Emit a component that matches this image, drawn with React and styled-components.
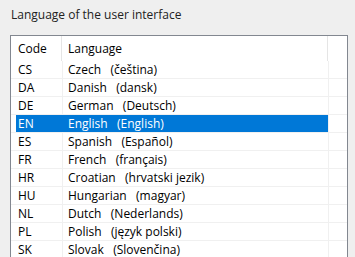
import React from 'react';
import styled, { createGlobalStyle } from 'styled-components';

const GlobalStyle = createGlobalStyle`
  html, body {
    margin: 0;
    padding: 0;
    background: #efefef;
    overflow: hidden;
  }
  body {
    font-family: "Open Sans", "Noto Sans", sans-serif;
    font-size: 12px;
    color: #1a1a1a;
  }
`;

const Page = styled.div`
  width: 355px;
  height: 257px;
  padding: 7px 0 0 10px;
  box-sizing: border-box;
  overflow: hidden;
`;

const Title = styled.div`
  height: 28px;
  line-height: 16px;
  padding-left: 1px;
  color: #222;
`;

const ListBox = styled.div`
  width: 338px;
  height: 223px;
  box-sizing: border-box;
  border: 1px solid #828790;
  background: #fff;
  overflow: hidden;
`;

const HeaderRow = styled.div`
  display: flex;
  height: 25px;
  line-height: 25px;
  color: #000;
`;

const HeaderCell = styled.div`
  width: ${({ $w }) => $w}px;
  padding-left: ${({ $pad }) => $pad || 0}px;
  box-sizing: border-box;
  border-right: ${({ $last }) => ($last ? 'none' : '1px solid #e5e5e5')};
  flex: none;
`;

const Row = styled.div`
  display: flex;
  height: 18px;
  box-sizing: border-box;
  border-bottom: 1px solid #f0f0f0;
  line-height: 17px;
  color: #000;
`;

const Lead = styled.div`
  width: 5px;
  flex: none;
`;

const Cell = styled.div`
  width: ${({ $w }) => $w}px;
  flex: none;
  box-sizing: content-box;
  padding-left: ${({ $pad }) => $pad}px;
  border-right: 1px solid
    ${({ $sel, $keepLine }) => ($sel && !$keepLine ? '#0078d7' : '#f0f0f0')};
  background: ${({ $sel }) => ($sel ? '#0078d7' : 'transparent')};
  color: ${({ $sel }) => ($sel ? '#fff' : 'inherit')};
  white-space: pre;
  overflow: hidden;
`;

const Tail = styled.div`
  flex: 1;
`;

const languages = [
  ['CS', 'Czech', 'čeština'],
  ['DA', 'Danish', 'dansk'],
  ['DE', 'German', 'Deutsch'],
  ['EN', 'English', 'English'],
  ['ES', 'Spanish', 'Español'],
  ['FR', 'French', 'français'],
  ['HR', 'Croatian', 'hrvatski jezik'],
  ['HU', 'Hungarian', 'magyar'],
  ['NL', 'Dutch', 'Nederlands'],
  ['PL', 'Polish', 'język polski'],
  ['SK', 'Slovak', 'Slovenčina'],
];

export default function App() {
  const selected = 'EN';
  return (
    <Page>
      <GlobalStyle />
      <Title>Language of the user interface</Title>
      <ListBox>
        <HeaderRow>
          <HeaderCell $w={51} $pad={7}>Code</HeaderCell>
          <HeaderCell $w={266} $pad={6}>Language</HeaderCell>
          <HeaderCell $w={19} $last />
        </HeaderRow>
        {languages.map(([code, name, native]) => {
          const sel = code === selected;
          return (
            <Row key={code}>
              <Lead />
              <Cell $w={44} $pad={2} $sel={sel}>{code}</Cell>
              <Cell $w={260} $pad={5} $sel={sel} $keepLine>
                {`${name}   (${native})`}
              </Cell>
              <Tail />
            </Row>
          );
        })}
      </ListBox>
    </Page>
  );
}
